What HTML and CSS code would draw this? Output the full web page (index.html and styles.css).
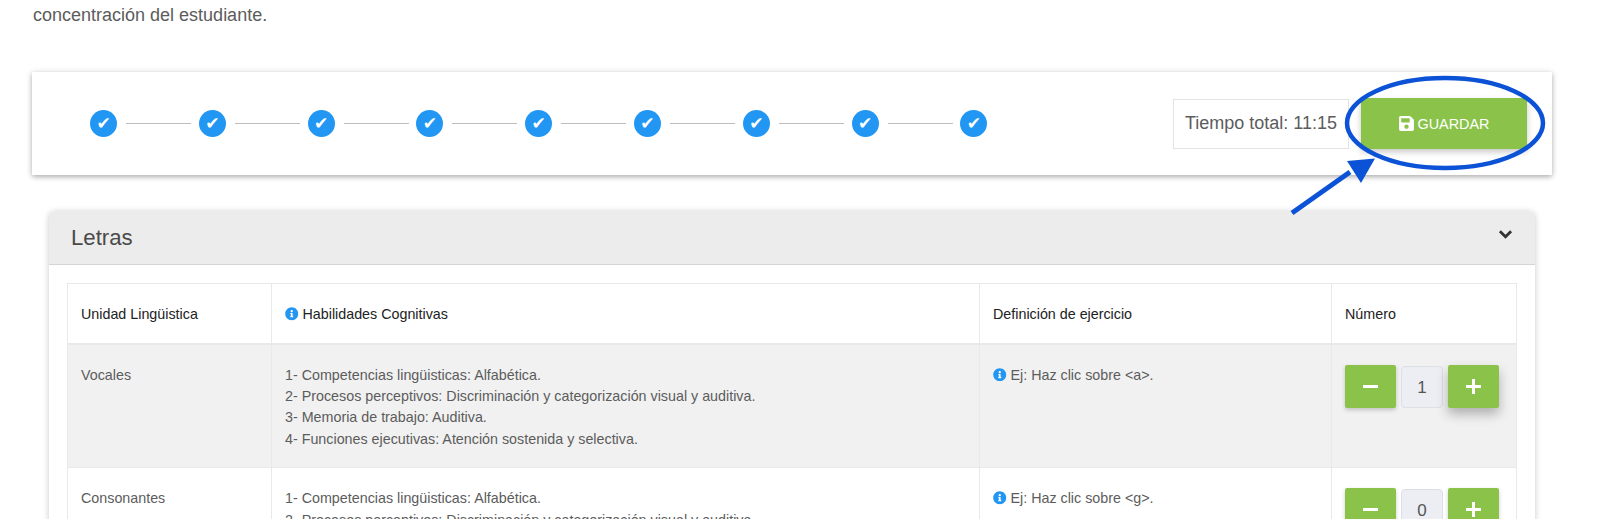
FILE: index.html
```html
<!DOCTYPE html>
<html lang="es">
<head>
<meta charset="utf-8">
<title>Letras</title>
<link rel="stylesheet" href="styles.css">
</head>
<body>
<svg width="0" height="0" class="defs">
  <symbol id="info" viewBox="0 0 512 512">
    <circle cx="256" cy="256" r="170" fill="#fff"/>
    <path fill="#2196f3" d="M256 8C119.043 8 8 119.083 8 256c0 136.997 111.043 248 248 248s248-111.003 248-248C504 119.083 392.957 8 256 8zm0 110c23.196 0 42 18.804 42 42s-18.804 42-42 42-42-18.804-42-42 18.804-42 42-42zm56 254c0 6.627-5.373 12-12 12h-88c-6.627 0-12-5.373-12-12v-24c0-6.627 5.373-12 12-12h12v-64h-12c-6.627 0-12-5.373-12-12v-24c0-6.627 5.373-12 12-12h64c6.627 0 12 5.373 12 12v100h12c6.627 0 12 5.373 12 12v24z"/>
  </symbol>
</svg>
<p class="intro">concentración del estudiante.</p>

<section class="toolbar">
  <ol class="steps">
    <li class="step"><span class="dot">✔</span></li>
    <li class="step"><span class="dot">✔</span></li>
    <li class="step"><span class="dot">✔</span></li>
    <li class="step"><span class="dot">✔</span></li>
    <li class="step"><span class="dot">✔</span></li>
    <li class="step"><span class="dot">✔</span></li>
    <li class="step"><span class="dot">✔</span></li>
    <li class="step"><span class="dot">✔</span></li>
    <li class="step"><span class="dot">✔</span></li>
  </ol>
  <div class="timer">Tiempo total: 11:15</div>
  <button class="save" type="button">
    <svg class="save-icon" viewBox="0 0 448 512"><path fill="#fff" d="M433.941 129.941l-83.882-83.882A48 48 0 0 0 316.118 32H48C21.49 32 0 53.49 0 80v352c0 26.51 21.49 48 48 48h352c26.51 0 48-21.49 48-48V163.882a48 48 0 0 0-14.059-33.941zM224 416c-35.346 0-64-28.654-64-64 0-35.346 28.654-64 64-64s64 28.654 64 64c0 35.346-28.654 64-64 64zm96-304.52V212c0 6.627-5.373 12-12 12H76c-6.627 0-12-5.373-12-12V108c0-6.627 5.373-12 12-12h228.52c3.183 0 6.235 1.264 8.485 3.515l3.48 3.48A11.996 11.996 0 0 1 320 111.48z"/></svg>
    GUARDAR
  </button>
</section>

<section class="panel">
  <header class="panel-head">
    <h2 class="panel-title">Letras</h2>
    <svg class="chevron" viewBox="0 0 14 10"><path d="M1.8 2 7 7.2 12.2 2" fill="none" stroke="#333" stroke-width="2.6"/></svg>
  </header>
  <div class="panel-body">
    <table class="grid">
      <colgroup><col class="c1"><col class="c2"><col class="c3"><col class="c4"></colgroup>
      <thead>
        <tr>
          <th>Unidad Lingüistica</th>
          <th><svg class="info"><use href="#info"/></svg> Habilidades Cognitivas</th>
          <th>Definición de ejercicio</th>
          <th>Número</th>
        </tr>
      </thead>
      <tbody>
        <tr class="shaded">
          <td>Vocales</td>
          <td>1- Competencias lingüisticas: Alfabética.<br>2- Procesos perceptivos: Discriminación y categorización visual y auditiva.<br>3- Memoria de trabajo: Auditiva.<br>4- Funciones ejecutivas: Atención sostenida y selectiva.</td>
          <td><svg class="info"><use href="#info"/></svg> Ej: Haz clic sobre &lt;a&gt;.</td>
          <td class="num-cell">
            <div class="stepper">
              <button class="pm" type="button"><span class="minus"></span></button>
              <span class="value">1</span>
              <button class="pm raised" type="button"><span class="plus"></span></button>
            </div>
          </td>
        </tr>
        <tr>
          <td>Consonantes</td>
          <td>1- Competencias lingüisticas: Alfabética.<br>2- Procesos perceptivos: Discriminación y categorización visual y auditiva.<br>3- Memoria de trabajo: Auditiva.<br>4- Funciones ejecutivas: Atención sostenida y selectiva.</td>
          <td><svg class="info"><use href="#info"/></svg> Ej: Haz clic sobre &lt;g&gt;.</td>
          <td class="num-cell">
            <div class="stepper">
              <button class="pm" type="button"><span class="minus"></span></button>
              <span class="value">0</span>
              <button class="pm" type="button"><span class="plus"></span></button>
            </div>
          </td>
        </tr>
      </tbody>
    </table>
  </div>
</section>

<svg class="annotation" viewBox="0 0 1600 519">
  <ellipse cx="1445" cy="123" rx="98" ry="45" fill="none" stroke="#0b52d6" stroke-width="4.5"/>
  <path d="M1292 213 1350 172" fill="none" stroke="#0b52d6" stroke-width="5"/>
  <path d="M1375 158.5 1347 161 1361 183Z" fill="#0b52d6"/>
</svg>
</body>
</html>
```
FILE: styles.css
```css
* { box-sizing: border-box; }
html, body {
  margin: 0;
  height: 519px;
  overflow: hidden;
  background: #fff;
}
body {
  position: relative;
  font-family: "Liberation Sans", Arial, sans-serif;
  color: #555;
}
.defs { position: absolute; }
.intro {
  margin: 0;
  padding: 5px 0 0 33px;
  height: 72px;
  font-size: 18px;
  line-height: 20px;
  color: #5c5c5c;
}

/* top bar */
.toolbar {
  display: flex;
  align-items: center;
  margin: 0 48px 0 32px;
  height: 103px;
  padding: 0 25px 0 58px;
  background: #fff;
  box-shadow: 0 2px 5px rgba(0,0,0,.28), 0 0 8px rgba(0,0,0,.08);
}
.steps {
  display: flex;
  flex: 1;
  list-style: none;
  margin: 0;
  padding: 0;
}
.step {
  display: flex;
  align-items: center;
  width: 108.8px;
}
.step::after {
  content: "";
  width: 65px;
  height: 1px;
  margin-left: 9px;
  background: #bdbdbd;
}
.step:last-child::after { display: none; }
.dot {
  flex: none;
  width: 27px;
  height: 27px;
  border-radius: 50%;
  background: #2196f3;
  color: #fff;
  font: 17px/27px "DejaVu Sans", sans-serif;
  text-align: center;
}
.timer {
  width: 176px;
  height: 50px;
  margin-right: 12px;
  border: 1px solid #e3e3e3;
  font-size: 18px;
  line-height: 47px;
  text-align: center;
  color: #5c5c5c;
}
.save {
  display: flex;
  align-items: center;
  justify-content: center;
  gap: 4px;
  width: 166px;
  height: 51px;
  border: 0;
  border-radius: 2px;
  background: #8bc34a;
  box-shadow: 0 3px 6px rgba(0,0,0,.22);
  color: #fff;
  font: 14.4px "Liberation Sans", Arial, sans-serif;
}
.save-icon { width: 15px; height: 17px; }

/* panel */
.panel {
  margin: 36px 65px 0 49px;
  border-radius: 6px 6px 0 0;
  background: #fff;
  box-shadow: 0 1px 6px rgba(0,0,0,.22);
}
.panel-head {
  display: flex;
  align-items: center;
  justify-content: space-between;
  height: 54px;
  padding: 0 22px 0 22px;
  background: #ececec;
  border-bottom: 1px solid #d4d4d4;
  border-radius: 6px 6px 0 0;
}
.panel-title {
  margin: 0;
  font-size: 22.2px;
  font-weight: 400;
  color: #4a4a4a;
}
.chevron { width: 15px; height: 11px; margin-top: -6px; }
.panel-body { padding: 18px 18px 0; }

/* table */
.grid {
  width: 1449px;
  table-layout: fixed;
  border-collapse: collapse;
  font-size: 14.3px;
  line-height: 21.4px;
  color: #5c5c5c;
}
.c1 { width: 204px; }
.c2 { width: 708px; }
.c3 { width: 352px; }
.c4 { width: 185px; }
.grid th, .grid td {
  border: 1px solid #e7e9ec;
  padding: 0 13px;
  text-align: left;
  vertical-align: top;
}
.grid th {
  height: 60px;
  padding-top: 20px;
  border-bottom: 2px solid #e7e9ec;
  font-weight: 400;
  color: #222;
}
.grid td { height: 123px; padding-top: 20px; padding-bottom: 17px; }
.shaded td { background: #f1f1f1; }
.info {
  width: 13.5px;
  height: 13.5px;
  vertical-align: -1.5px;
}

/* stepper */
.stepper {
  display: flex;
  align-items: flex-start;
  gap: 5px;
}
.pm {
  position: relative;
  flex: none;
  width: 51px;
  height: 43px;
  border: 0;
  border-radius: 2px;
  background: #8bc34a;
  box-shadow: 0 2px 4px rgba(0,0,0,.2);
}
.raised { box-shadow: 0 6px 12px rgba(0,0,0,.28); }
.minus, .plus {
  position: absolute;
  left: 18px;
  top: 20px;
  width: 15px;
  height: 3px;
  background: #fff;
}
.plus::after {
  content: "";
  position: absolute;
  left: 6px;
  top: -6px;
  width: 3px;
  height: 15px;
  background: #fff;
}
.value {
  flex: none;
  width: 42px;
  height: 42px;
  margin-top: 1px;
  border: 1px solid #dcdfe6;
  border-radius: 4px;
  background: #eceef3;
  font-size: 17px;
  line-height: 42px;
  text-align: center;
  color: #555;
}

.annotation {
  position: absolute;
  left: 0;
  top: 0;
  width: 1600px;
  height: 519px;
  pointer-events: none;
}
```
